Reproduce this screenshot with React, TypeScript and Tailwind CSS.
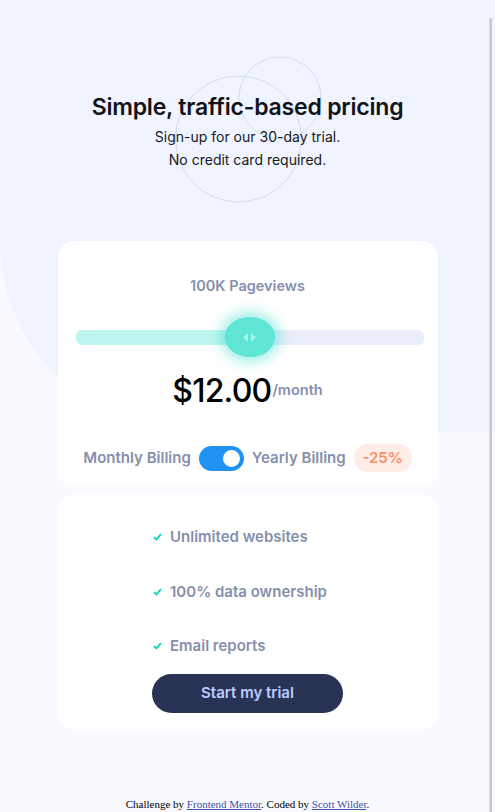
import React from "react";

function Check() {
  return (
    <svg width="9" height="8" viewBox="0 0 9 8" className="shrink-0">
      <path d="M1 4.2 L3.4 6.4 L8 1.2" fill="none" stroke="#10D8C4" strokeWidth="2" />
    </svg>
  );
}

export default function App() {
  const font = { fontFamily: "Inter, 'Noto Sans', sans-serif" };
  return (
    <div className="relative h-[812px] w-full overflow-hidden bg-[#f9faff]" style={font}>
      {/* background pattern */}
      <div className="absolute left-0 top-0 h-[432px] w-full rounded-bl-[192px] bg-[#f0f4fe]" />
      {/* circles */}
      <svg className="absolute left-0 top-0" width="495" height="240" viewBox="0 0 495 240">
        <circle cx="238.5" cy="139" r="63" fill="none" stroke="#d3dbf3" strokeWidth="1" />
        <circle cx="280" cy="98" r="41" fill="none" stroke="#d3dbf3" strokeWidth="1" />
      </svg>
      {/* scrollbar-like line */}
      <div className="absolute left-[489px] top-[18px] bottom-0 w-[3px] bg-[#c9c9c9] border-l border-[#dadada]" />

      <div className="relative flex flex-col items-center">
        <header className="flex flex-col items-center pt-[93px] text-center">
          <h1 className="text-[23px] font-semibold leading-[28px] tracking-[-0.2px] text-[#111318]">
            Simple, traffic-based pricing
          </h1>
          <p className="mt-[4px] text-[14px] leading-[23px] text-[#16181d]">
            Sign-up for our 30-day trial.
            <br />
            No credit card required.
          </p>
        </header>

        <section className="mt-[70px] flex h-[246px] w-[380px] flex-col items-center rounded-[16px] bg-white">
          <p className="mt-[35px] text-[14.5px] font-semibold leading-[20px] text-[#858fad]">
            100K Pageviews
          </p>
          <div className="relative ml-[4px] mt-[21px] flex h-[40px] w-[348px] items-center">
            <div className="flex h-[15px] w-full overflow-hidden rounded-[6px] bg-[#eaeefb]">
              <div className="h-full w-[174px] bg-[#bdf6ee]" />
            </div>
            <div className="absolute left-[149px] top-0 flex h-[40px] w-[50px] items-center justify-center gap-[3px] rounded-[50%] bg-[#5fe5d4] shadow-[0_0_14px_4px_rgba(16,213,194,0.45)]">
              <svg width="5" height="9" viewBox="0 0 5 9">
                <path d="M5 0 L0 4.5 L5 9 Z" fill="#a9f6ea" />
              </svg>
              <svg width="5" height="9" viewBox="0 0 5 9">
                <path d="M0 0 L5 4.5 L0 9 Z" fill="#a9f6ea" />
              </svg>
            </div>
          </div>
          <div className="mt-[14px] flex items-center">
            <span className="text-[32px] font-medium leading-[40px] tracking-[-0.8px] text-black">$12.00</span>
            <span className="ml-[1px] mt-[-2px] text-[14.5px] font-semibold text-[#858fad]">/month</span>
          </div>
          <div className="mt-[33px] flex items-center">
            <span className="text-[15px] font-semibold text-[#858fad]">Monthly Billing</span>
            <div className="ml-[8px] flex h-[25px] w-[45px] items-center justify-end rounded-full bg-[#1f93f3] pr-[4px]">
              <div className="h-[17px] w-[17px] rounded-full bg-white" />
            </div>
            <span className="ml-[8px] text-[15px] font-semibold text-[#858fad]">Yearly Billing</span>
            <span className="ml-[8px] flex h-[28px] w-[58px] items-center justify-center rounded-full bg-[#feece7] text-[15px] font-semibold text-[#ff8c66]">
              -25%
            </span>
          </div>
        </section>

        <section className="mt-[8px] flex h-[234px] w-[380px] flex-col items-center rounded-[16px] bg-white">
          <div className="flex w-[191px] flex-col">
            <ul className="flex flex-col">
              <li className="mt-[32px] flex h-[20px] items-center gap-[8px] pl-[1px] text-[15px] font-semibold text-[#858fad]">
                <Check />
                Unlimited websites
              </li>
              <li className="mt-[35px] flex h-[20px] items-center gap-[8px] pl-[1px] text-[15px] font-semibold text-[#858fad]">
                <Check />
                100% data ownership
              </li>
              <li className="mt-[34px] flex h-[20px] items-center gap-[8px] pl-[1px] text-[15px] font-semibold text-[#858fad]">
                <Check />
                Email reports
              </li>
            </ul>
            <button className="mt-[18px] flex h-[39px] w-[191px] items-center justify-center rounded-full bg-[#293356] text-[15px] font-semibold text-[#bdccff]">
              Start my trial
            </button>
          </div>
        </section>

        <footer
          className="mt-[68px] text-center text-[11px] leading-[14px] text-black"
          style={{ fontFamily: "'Liberation Serif', serif" }}
        >
          Challenge by{" "}
          <a href="#" className="text-[#3e52a3] underline">
            Frontend Mentor
          </a>
          . Coded by{" "}
          <a href="#" className="text-[#3e52a3] underline">
            Scott Wilder
          </a>
          .
        </footer>
      </div>
    </div>
  );
}
